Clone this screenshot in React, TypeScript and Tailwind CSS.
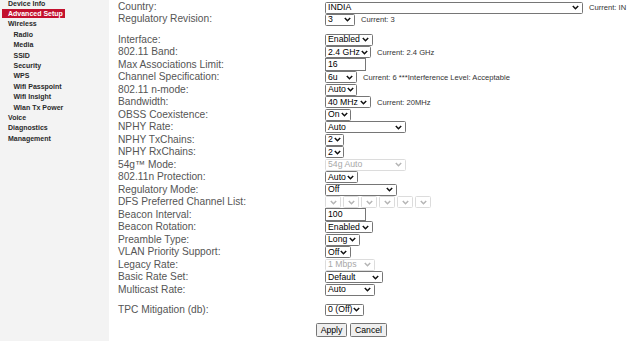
import React from 'react';

/* Sidebar navigation entries — depth 1 = nested under Wireless */
const NAV: { label: string; depth: number; active?: boolean }[] = [
  { label: 'Device Info', depth: 0 },
  { label: 'Advanced Setup', depth: 0, active: true },
  { label: 'Wireless', depth: 0 },
  { label: 'Radio', depth: 1 },
  { label: 'Media', depth: 1 },
  { label: 'SSID', depth: 1 },
  { label: 'Security', depth: 1 },
  { label: 'WPS', depth: 1 },
  { label: 'Wifi Passpoint', depth: 1 },
  { label: 'Wifi Insight', depth: 1 },
  { label: 'Wlan Tx Power', depth: 1 },
  { label: 'Voice', depth: 0 },
  { label: 'Diagnostics', depth: 0 },
  { label: 'Management', depth: 0 },
];

function Chevron({ disabled }: { disabled?: boolean }) {
  return (
    <svg width="7" height="5" viewBox="0 0 7 5" className="shrink-0">
      <polyline
        points="0.8,0.9 3.5,3.7 6.2,0.9"
        fill="none"
        stroke={disabled ? '#b5b5b5' : '#111'}
        strokeWidth="1.5"
      />
    </svg>
  );
}

function Select({ value, w, disabled }: { value: string; w: number; disabled?: boolean }) {
  return (
    <div
      className={
        'flex h-[12px] items-center justify-between gap-[1px] overflow-hidden whitespace-nowrap rounded-[1.5px] border pl-[2px] pr-[3px] text-[8.7px] leading-none ' +
        (disabled ? 'border-[#dcdcdc] text-[#a8a8a8]' : 'border-[#767676] text-black')
      }
      style={{ width: w }}
    >
      <span className="whitespace-nowrap">{value}</span>
      <Chevron disabled={disabled} />
    </div>
  );
}

function TextBox({ value, w }: { value: string; w: number }) {
  return (
    <div
      className="flex h-[13px] items-center border border-[#767676] pl-[2px] text-[8.7px] leading-none text-black"
      style={{ width: w }}
    >
      {value}
    </div>
  );
}

function Note({ children }: { children: React.ReactNode }) {
  return <span className="ml-[6px] whitespace-nowrap text-[7.6px] text-[#333]">{children}</span>;
}

function Row({ label, children, h = 12.5 }: { label: string; children: React.ReactNode; h?: number }) {
  return (
    <div className="flex items-center" style={{ height: h }}>
      <div className="w-[207px] shrink-0 text-[10.2px] leading-none text-[#555]">{label}</div>
      <div className="flex items-center">{children}</div>
    </div>
  );
}

export default function App() {
  return (
    <div className="flex h-[341px] w-[640px] overflow-hidden bg-white font-['Liberation_Sans',Arial,sans-serif]">
      {/* ── Sidebar ─────────────────────────────────────────── */}
      <nav className="w-[109px] shrink-0 bg-[#f3f3f3]">
        <ul className="-mt-[2px]">
          {NAV.map(item => (
            <li key={item.label} className="flex h-[10.4px] items-center">
              <span
                className={
                  'text-[7px] font-bold leading-none ' +
                  (item.active
                    ? 'ml-[2px] bg-[#c3112e] py-[1.2px] pl-[6px] pr-[2px] text-white'
                    : item.depth === 1
                      ? 'ml-[13.5px] text-[#2a2a2a]'
                      : 'ml-[8px] text-[#2a2a2a]')
                }
              >
                {item.label}
              </span>
            </li>
          ))}
        </ul>
      </nav>

      {/* ── Settings form ───────────────────────────────────── */}
      <main className="flex-1 pl-[9px] pt-[1.5px]">
        <Row label="Country:" h={12}>
          <Select value="INDIA" w={258} />
          <Note>Current: IN</Note>
        </Row>
        <Row label="Regulatory Revision:" h={12}>
          <Select value="3" w={30} />
          <Note>Current: 3</Note>
        </Row>

        <div className="mt-[8px]">
          <Row label="Interface:">
            <Select value="Enabled" w={48} />
          </Row>
          <Row label="802.11 Band:">
            <Select value="2.4 GHz" w={46} />
            <Note>Current: 2.4 GHz</Note>
          </Row>
          <Row label="Max Associations Limit:">
            <TextBox value="16" w={41} />
          </Row>
          <Row label="Channel Specification:">
            <Select value="6u" w={32} />
            <Note>Current: 6 ***Interference Level: Acceptable</Note>
          </Row>
          <Row label="802.11 n-mode:">
            <Select value="Auto" w={32} />
          </Row>
          <Row label="Bandwidth:">
            <Select value="40 MHz" w={46} />
            <Note>Current: 20MHz</Note>
          </Row>
          <Row label="OBSS Coexistence:">
            <Select value="On" w={26} />
          </Row>
          <Row label="NPHY Rate:">
            <Select value="Auto" w={81} />
          </Row>
          <Row label="NPHY TxChains:">
            <Select value="2" w={19} />
          </Row>
          <Row label="NPHY RxChains:">
            <Select value="2" w={19} />
          </Row>
          <Row label="54g™ Mode:">
            <Select value="54g Auto" w={81} disabled />
          </Row>
          <Row label="802.11n Protection:">
            <Select value="Auto" w={33} />
          </Row>
          <Row label="Regulatory Mode:">
            <Select value="Off" w={72} />
          </Row>
          <Row label="DFS Preferred Channel List:">
            <div className="flex gap-[2.5px]">
              {[0, 1, 2, 3, 4, 5].map(i => (
                <Select key={i} value="" w={15.5} disabled />
              ))}
            </div>
          </Row>
          <Row label="Beacon Interval:">
            <TextBox value="100" w={41} />
          </Row>
          <Row label="Beacon Rotation:">
            <Select value="Enabled" w={48} />
          </Row>
          <Row label="Preamble Type:">
            <Select value="Long" w={35} />
          </Row>
          <Row label="VLAN Priority Support:">
            <Select value="Off" w={26} />
          </Row>
          <Row label="Legacy Rate:">
            <Select value="1 Mbps" w={50} disabled />
          </Row>
          <Row label="Basic Rate Set:">
            <Select value="Default" w={58} />
          </Row>
          <Row label="Multicast Rate:">
            <Select value="Auto" w={50} />
          </Row>
        </div>

        <div className="mt-[7.5px]">
          <Row label="TPC Mitigation (db):">
            <Select value="0 (Off)" w={39} />
          </Row>
        </div>

        <div className="mt-[7px] flex gap-[3px] pl-[198px]">
          <button className="h-[14px] w-[31px] rounded-[1.5px] border border-[#767676] bg-[#efefef] text-[8.7px] leading-none text-black">
            Apply
          </button>
          <button className="h-[14px] w-[37px] rounded-[1.5px] border border-[#767676] bg-[#efefef] text-[8.7px] leading-none text-black">
            Cancel
          </button>
        </div>
      </main>
    </div>
  );
}
